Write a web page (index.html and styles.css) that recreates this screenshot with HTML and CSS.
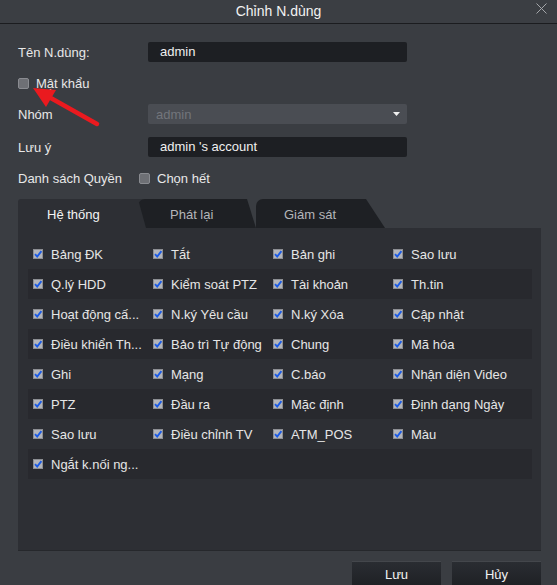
FILE: index.html
```html
<!DOCTYPE html>
<html lang="vi">
<head>
<meta charset="utf-8">
<title>Chỉnh N.dùng</title>
<link rel="stylesheet" href="styles.css">
</head>
<body>
<div class="window">
  <div class="titlebar">
    <span class="title">Chỉnh N.dùng</span>
    <svg class="close" width="11" height="11" viewBox="0 0 11 11"><path d="M0.5 0.5 L10.5 10.5 M10.5 0.5 L0.5 10.5" stroke="#a4a6aa" stroke-width="1"/></svg>
  </div>
  <div class="content">
    <div class="form">
      <div class="frow">
        <span class="label">Tên N.dùng:</span>
        <div class="input">admin</div>
      </div>
      <div class="frow">
        <span class="cb-off"></span><span class="cb-label">Mật khẩu</span>
      </div>
      <div class="frow">
        <span class="label">Nhóm</span>
        <div class="select"><span>admin</span><svg width="7" height="4" viewBox="0 0 7 4"><path d="M0 0 H7 L3.5 4 Z" fill="#f0f0f0"/></svg></div>
      </div>
      <div class="frow frow-note">
        <span class="label">Lưu ý</span>
        <div class="input">admin 's account</div>
      </div>
      <div class="frow">
        <span class="label label-short">Danh sách Quyền</span>
        <span class="cb-off"></span><span class="cb-label">Chọn hết</span>
      </div>
    </div>

    <div class="tabs">
      <div class="tab tab-active">Hệ thống</div>
      <div class="tab tab-2">Phát lại</div>
      <div class="tab tab-3">Giám sát</div>
    </div>
    <div class="panel">
      <div class="rows" id="rows"></div>
    </div>
    <div class="buttons">
      <div class="btn">Lưu</div>
      <div class="btn">Hủy</div>
    </div>
  </div>
  <svg class="arrow" width="110" height="140" viewBox="0 0 110 140">
    <line x1="97" y1="124" x2="49" y2="97" stroke="#ea1a1f" stroke-width="4.5" stroke-linecap="round"/>
    <polygon points="33,88 56,90 46,107" fill="#ea1a1f"/>
  </svg>
</div>
<script>
  var items = [
    "Bảng ĐK","Tắt","Bản ghi","Sao lưu",
    "Q.lý HDD","Kiểm soát PTZ","Tài khoản","Th.tin",
    "Hoạt động cấ...","N.ký Yêu cầu","N.ký Xóa","Cập nhật",
    "Điều khiển Th...","Bảo trì Tự động","Chung","Mã hóa",
    "Ghi","Mạng","C.báo","Nhận diện Video",
    "PTZ","Đầu ra","Mặc định","Định dạng Ngày",
    "Sao lưu","Điều chỉnh TV","ATM_POS","Màu",
    "Ngắt k.nối ng..."
  ];
  var check = '<svg class="cb" width="10" height="10" viewBox="0 0 10 10"><rect x="0.5" y="0.5" width="9" height="9" fill="#b3b5ba" stroke="#8c8e93"/><path d="M2 5.2 L4.2 7.6 L8.4 2.2" fill="none" stroke="#1b5be6" stroke-width="1.9"/></svg>';
  var rows = document.getElementById('rows');
  for (var r = 0; r < 8; r++) {
    var row = document.createElement('div');
    row.className = 'prow' + (r % 2 ? ' prow-alt' : '');
    for (var c = 0; c < 4; c++) {
      var t = items[r * 4 + c];
      var cell = document.createElement('div');
      cell.className = 'cell';
      if (t) cell.innerHTML = check + '<span>' + t + '</span>';
      row.appendChild(cell);
    }
    rows.appendChild(row);
  }
</script>
</body>
</html>
```

FILE: styles.css
```css
* { box-sizing: border-box; }
html, body {
  margin: 0;
  padding: 0;
  background: #3a3d42;
  overflow: hidden;
}
body {
  font-family: "Liberation Sans", Arial, sans-serif;
  font-size: 13px;
  color: #e8e8e8;
}
.window {
  position: relative;
  width: 557px;
  height: 585px;
  background: #3a3d42;
}
.titlebar {
  height: 24px;
  background: #3b3e43;
  border-bottom: 1px solid #1b1c1f;
  display: flex;
  align-items: center;
  justify-content: center;
  position: relative;
}
.title {
  font-size: 14px;
  color: #f2f2f2;
  margin-top: -1px;
}
.close {
  position: absolute;
  right: 10px;
  top: 3px;
}
.content {
  padding: 18px 16px 0 18px;
}
.form {
  display: flex;
  flex-direction: column;
  gap: 11px;
}
.frow {
  height: 20px;
  display: flex;
  align-items: center;
}
.frow-note { margin-top: 2px; }
.label {
  width: 130px;
  flex: none;
}
.label-short { width: 121px; }
.input {
  width: 259px;
  height: 20px;
  background: #1d1f23;
  border-radius: 2px;
  padding-left: 12px;
  line-height: 20px;
  color: #f0f0f0;
}
.select {
  width: 259px;
  height: 20px;
  background: #4a4d53;
  border-radius: 2px;
  padding: 0 7px 0 8px;
  display: flex;
  align-items: center;
  justify-content: space-between;
  color: #72757b;
}
.cb-off {
  width: 11px;
  height: 11px;
  background: #6e7075;
  border: 1px solid #8a8c91;
  border-radius: 2px;
  flex: none;
}
.cb-label { margin-left: 7px; }

.tabs {
  margin-top: 11px;
  height: 29px;
  display: flex;
}
.tab {
  height: 29px;
  line-height: 31px;
  color: #b4b6ba;
  flex: none;
}
.tab-active {
  width: 128px;
  background: #2d2f34;
  color: #f4f4f4;
  padding-left: 29px;
  border-radius: 3px 0 0 0;
}
.tab-2 {
  width: 118px;
  margin-left: -8px;
  background: #1e2024;
  padding-left: 32px;
  border-radius: 7px 0 0 0;
  clip-path: polygon(0 0, 109px 0, 118px 100%, 8px 100%);
}
.tab-3 {
  width: 129px;
  background: #1e2024;
  padding-left: 28px;
  border-radius: 7px 0 0 0;
  clip-path: polygon(0 0, 110px 0, 129px 100%, 0 100%);
}
.panel {
  width: 523px;
  height: 323px;
  background: #2d2f34;
  border-bottom: 1px solid #26282c;
  padding: 11px 0 0 10px;
}
.rows {
  width: 504px;
  display: flex;
  flex-direction: column;
}
.prow {
  height: 30px;
  display: grid;
  grid-template-columns: repeat(4, 120px);
}
.prow-alt { background: #28292e; }
.cell {
  display: flex;
  align-items: center;
  padding-left: 5px;
  white-space: nowrap;
  color: #e6e6e6;
}
.cb {
  flex: none;
  margin-right: 8px;
}
.buttons {
  margin-top: 10px;
  display: flex;
  justify-content: flex-end;
  gap: 11px;
  width: 523px;
}
.btn {
  width: 89px;
  height: 30px;
  background: linear-gradient(#2a2d32, #1c1e22);
  border-top: 1px solid #44474c;
  text-align: center;
  line-height: 26px;
  color: #f2f2f2;
}
.arrow {
  position: absolute;
  left: 0;
  top: 0;
  pointer-events: none;
}
```
